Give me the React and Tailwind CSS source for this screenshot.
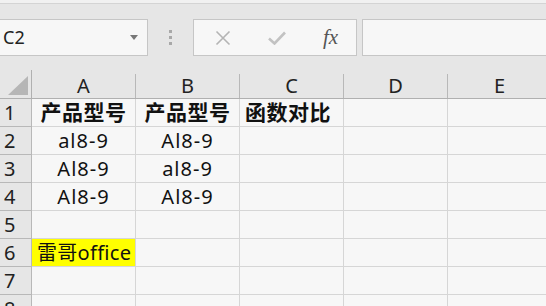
import React from "react";

const cols = ["A", "B", "C", "D", "E"];

const rows = [
  { n: 1, cells: ["产品型号", "产品型号", "函数对比", "", ""], head: true },
  { n: 2, cells: ["al8-9", "Al8-9", "", "", ""] },
  { n: 3, cells: ["Al8-9", "al8-9", "", "", ""] },
  { n: 4, cells: ["Al8-9", "Al8-9", "", "", ""] },
  { n: 5, cells: ["", "", "", "", ""] },
  { n: 6, cells: ["雷哥office", "", "", "", ""], yellow: true },
  { n: 7, cells: ["", "", "", "", ""] },
  { n: 8, cells: ["", "", "", "", ""] },
];

const font = { fontFamily: '"Noto Sans", "Noto Sans CJK SC", sans-serif' };

const cellClass = (r, i) => {
  if (r.yellow && i === 0) return "bg-[#ffff00] justify-start pl-[5px] tracking-[0.3px]";
  if (r.head && i === 2) return "bg-[#f7f7f7] justify-start pl-[5px] font-bold text-[21px] tracking-[0.5px]";
  if (r.head) return "bg-[#f7f7f7] justify-center font-bold text-[21px] tracking-[0.5px]";
  return "bg-[#f7f7f7] justify-center tracking-[1px]";
};

const App = () => {
  return (
    <div
      className="w-[546px] h-[306px] overflow-hidden bg-[#e6e6e6] text-[#111]"
      style={font}
    >
      {/* top strip */}
      <div className="h-[4px] bg-[#f1f1f1] border-b border-[#d4d4d4]" />

      {/* formula bar */}
      <div className="flex items-start pt-[15px] h-[66px]">
        <div className="w-[148px] h-[37px] bg-[#f7f7f7] border border-l-0 border-[#c6c6c6] flex items-center justify-between pl-[3px] pr-[9px]">
          <span className="text-[18px] text-[#222]">C2</span>
          <svg width="8" height="5" viewBox="0 0 8 5">
            <path d="M0 0H8L4 5Z" fill="#777" />
          </svg>
        </div>
        <div className="w-[45px] h-[37px] flex flex-col items-center justify-center gap-[3px]">
          <div className="w-[3px] h-[3px] bg-[#a8a8a8]" />
          <div className="w-[3px] h-[3px] bg-[#a8a8a8]" />
          <div className="w-[3px] h-[3px] bg-[#a8a8a8]" />
        </div>
        <div className="w-[164px] h-[37px] bg-[#f7f7f7] border border-[#c6c6c6] flex items-center pl-[21px]">
          <svg width="16" height="16" viewBox="0 0 16 16">
            <path d="M1.5 1.5L14.5 14.5M14.5 1.5L1.5 14.5" stroke="#b4b4b4" strokeWidth="1.6" />
          </svg>
          <svg width="18" height="14" viewBox="0 0 18 14" className="ml-[37px]">
            <path d="M1 7.5L6.5 12.5L17 1.5" stroke="#c2c2c2" strokeWidth="2.6" fill="none" />
          </svg>
          <span
            className="ml-[37px] text-[21px] italic text-[#555] leading-none"
            style={{ fontFamily: '"Liberation Serif", serif' }}
          >
            fx
          </span>
        </div>
        <div className="ml-[5px] flex-1 h-[37px] bg-[#f7f7f7] border border-r-0 border-[#c6c6c6]" />
      </div>

      {/* sheet */}
      <div className="grid grid-cols-[32px_104px_104px_104px_104px_104px]">
        <div className="h-[29px] border-b border-r border-[#b0b0b0] flex items-end pl-[8px] pb-[3px]">
          <svg width="20" height="19" viewBox="0 0 20 19">
            <path d="M20 0V19H0Z" fill="#b6b6b6" />
          </svg>
        </div>
        {cols.map((c) => (
          <div key={c} className="h-[29px] border-b border-[#b0b0b0] pt-[4px]">
            <div className="h-[24px] border-r border-[#b8b8b8] flex items-center justify-center text-[20px] text-[#222]">
              {c}
            </div>
          </div>
        ))}

        {rows.map((r) => (
          <React.Fragment key={r.n}>
            <div className="h-[28px] border-b border-r border-[#b8b8b8] pl-[4px] flex items-center text-[20px] text-[#222] bg-[#e6e6e6]">
              {r.n}
            </div>
            {r.cells.map((t, i) => (
              <div
                key={i}
                className={`h-[28px] border-b border-r border-[#d6d6d6] flex items-center text-[20px] whitespace-nowrap ${cellClass(r, i)}`}
              >
                {t}
              </div>
            ))}
          </React.Fragment>
        ))}
      </div>
    </div>
  );
};

export default App;
